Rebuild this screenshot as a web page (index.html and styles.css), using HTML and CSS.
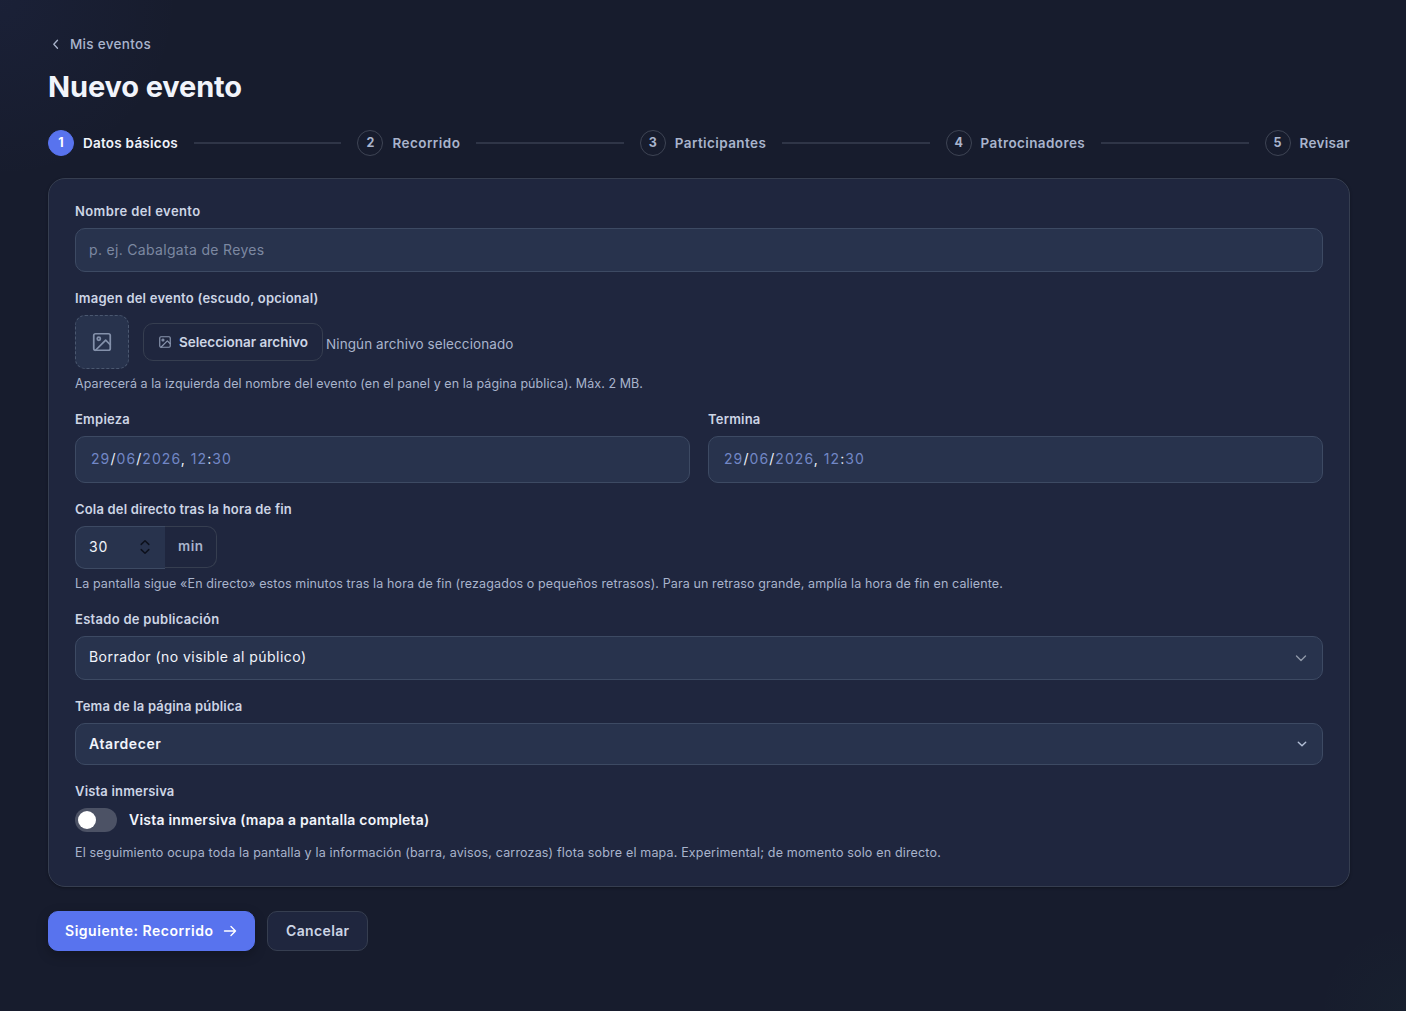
FILE: index.html
```html
<!DOCTYPE html>
<html lang="es">
<head>
<meta charset="utf-8">
<title>Nuevo evento</title>
<link rel="stylesheet" href="styles.css">
</head>
<body>
<main class="page">
  <a class="back"><svg class="back-icon" viewBox="0 0 14 14"><path d="M9.500 3.200 5.800 7.200l3.700 4"/></svg><span class="t-back">Mis eventos</span></a>
  <h1 class="title"><span class="t-title">Nuevo evento</span></h1>

  <ol class="steps">
    <li class="step step-active"><span class="step-num">1</span><span class="t-step1">Datos básicos</span></li>
    <li class="step-line"></li>
    <li class="step"><span class="step-num">2</span><span class="t-step2">Recorrido</span></li>
    <li class="step-line"></li>
    <li class="step"><span class="step-num">3</span><span class="t-step3">Participantes</span></li>
    <li class="step-line"></li>
    <li class="step"><span class="step-num">4</span><span class="t-step4">Patrocinadores</span></li>
    <li class="step-line"></li>
    <li class="step"><span class="step-num">5</span><span class="t-step5">Revisar</span></li>
  </ol>

  <section class="card">
    <div class="field">
      <div class="label"><span class="t-name">Nombre del evento</span></div>
      <div class="control control-name"><span class="t-placeholder">p. ej. Cabalgata de Reyes</span></div>
    </div>

    <div class="field">
      <div class="label"><span class="t-image">Imagen del evento (escudo, opcional)</span></div>
      <div class="upload">
        <div class="thumb"><svg class="thumb-icon" viewBox="0 0 24 24"><rect x="3" y="3" width="18" height="18" rx="2"/><circle cx="8.5" cy="8.5" r="1.7"/><path d="M21 15l-5-5L5 21"/></svg></div>
        <div class="file">
          <button class="file-button"><svg class="file-icon" viewBox="0 0 24 24"><rect x="3" y="3" width="18" height="18" rx="2"/><circle cx="8.5" cy="8.5" r="1.7"/><path d="M21 15l-5-5L5 21"/></svg><span class="t-select">Seleccionar archivo</span></button>
          <span class="file-status"><span class="t-nofile">Ningún archivo seleccionado</span></span>
        </div>
      </div>
      <div class="hint"><span class="t-hint1">Aparecerá a la izquierda del nombre del evento (en el panel y en la página pública). Máx. 2 MB.</span></div>
    </div>

    <div class="dates">
      <div class="field">
        <div class="label"><span class="t-start">Empieza</span></div>
        <div class="control control-date"><span class="date t-date"><b>29</b>/<b>06</b>/<b>2026</b>, <b>12</b>:<b>30</b></span></div>
      </div>
      <div class="field">
        <div class="label"><span class="t-end">Termina</span></div>
        <div class="control control-date"><span class="date t-date"><b>29</b>/<b>06</b>/<b>2026</b>, <b>12</b>:<b>30</b></span></div>
      </div>
    </div>

    <div class="field">
      <div class="label"><span class="t-tail">Cola del directo tras la hora de fin</span></div>
      <div class="minutes">
        <div class="control minutes-input"><span class="t-30">30</span><svg class="spinner" viewBox="0 0 10 16"><path d="M1.2 5.4 5 1.8l3.8 3.6M1.2 10.6 5 14.2l3.8-3.6"/></svg></div>
        <div class="minutes-unit"><span class="t-min">min</span></div>
      </div>
      <div class="hint"><span class="t-hint2">La pantalla sigue «En directo» estos minutos tras la hora de fin (rezagados o pequeños retrasos). Para un retraso grande, amplía la hora de fin en caliente.</span></div>
    </div>

    <div class="field">
      <div class="label"><span class="t-status">Estado de publicación</span></div>
      <div class="control control-status"><span class="t-draft">Borrador (no visible al público)</span><svg class="chevron" viewBox="0 0 16 16"><path d="m3.5 6 4.5 4.5L12.500 6"/></svg></div>
    </div>

    <div class="field">
      <div class="label"><span class="t-theme">Tema de la página pública</span></div>
      <div class="control control-theme"><span class="t-sunset">Atardecer</span><svg class="chevron chevron-small" viewBox="0 0 14 14"><path d="M3.300 5.200 7 8.800l3.700-3.600"/></svg></div>
    </div>

    <div class="field">
      <div class="label"><span class="t-immersive">Vista inmersiva</span></div>
      <div class="toggle-row"><span class="toggle"></span><span class="t-toggle">Vista inmersiva (mapa a pantalla completa)</span></div>
      <div class="hint hint-toggle"><span class="t-hint3">El seguimiento ocupa toda la pantalla y la información (barra, avisos, carrozas) flota sobre el mapa. Experimental; de momento solo en directo.</span></div>
    </div>
  </section>

  <div class="actions">
    <button class="button button-primary"><span class="t-next">Siguiente: Recorrido</span><svg class="arrow" viewBox="0 0 16 16"><path d="M2.500 8h11M9 3.500 13.500 8 9 12.500"/></svg></button>
    <button class="button"><span class="t-cancel">Cancelar</span></button>
  </div>
</main>
</body>
</html>
```
FILE: styles.css
```css
* { box-sizing: border-box; }

body {
  margin: 0;
  min-height: 1011px;
  background:
    radial-gradient(circle at 0 0, rgba(88, 115, 238, 0.05), transparent 180px),
    radial-gradient(circle at 100% 100%, rgba(60, 200, 120, 0.025), transparent 90px),
    #171c2d;
  color: #f1f4fb;
  font: 14px/20px Inter, "Liberation Sans", sans-serif;
}

svg {
  display: block;
  flex: none;
  fill: none;
  stroke: currentColor;
  stroke-linecap: round;
  stroke-linejoin: round;
}

span { white-space: nowrap; }

.page { padding: 34px 56px 60px 48px; }

.back {
  display: flex;
  align-items: center;
  gap: 8px;
  height: 20px;
  color: #a9b4cc;
  font-size: 13.500px;
  font-weight: 500;
}
.back-icon { width: 14px; height: 14px; stroke-width: 1.300; }

.title {
  margin: 13px 0 0;
  height: 40px;
  font-size: 29px;
  line-height: 40px;
  font-weight: 700;
}

.steps {
  display: flex;
  align-items: center;
  gap: 16px;
  margin: 23px 0 22px;
  padding: 0;
  list-style: none;
}
.step {
  display: flex;
  align-items: center;
  gap: 9px;
  color: #a9b4cc;
  font-size: 13.500px;
  font-weight: 600;
}
.step-active { color: #f1f4fb; }
.step-num {
  display: grid;
  place-items: center;
  width: 26px;
  height: 26px;
  border: 1px solid #3e4454;
  border-radius: 50%;
  font-size: 12.500px;
  font-weight: 700;
}
.step-active .step-num { border-color: #5873ee; background: #5873ee; color: #fff; }
.step-line { flex: 1; height: 2px; background: #2f3547; }

.card {
  display: flex;
  flex-direction: column;
  gap: 16px;
  height: 709px;
  padding: 22px 26px 0;
  border: 1px solid #363e50;
  border-radius: 17px;
  background: #1f263e;
  box-shadow: 0 1px 3px rgba(0, 0, 0, 0.3);
}

.label {
  height: 20px;
  margin-bottom: 7px;
  color: #cdd5e5;
  font-size: 13px;
  font-weight: 600;
}
.hint {
  height: 19px;
  margin-top: 5px;
  color: #a9b4cc;
  font-size: 12.500px;
  line-height: 19px;
}
.hint-toggle { margin-top: 11px; }

.control {
  display: flex;
  align-items: center;
  justify-content: space-between;
  padding: 0 13px;
  border: 1px solid #3d4a63;
  border-radius: 10px;
  background: #28334d;
}
.control-name { height: 44px; color: #7c88a1; }

.upload { display: flex; height: 54px; gap: 14px; }
.thumb {
  display: grid;
  place-items: center;
  width: 54px;
  height: 54px;
  border: 1px dashed #4b5870;
  border-radius: 10px;
  background: #28334d;
  color: #8491ab;
}
.thumb-icon { width: 22px; height: 22px; stroke-width: 1.900; }
.file { display: flex; gap: 3px; padding-top: 8px; }
.file-button {
  display: flex;
  align-items: center;
  gap: 7px;
  width: 180px;
  height: 38px;
  padding: 0 14px;
  border: 1px solid #363e50;
  border-radius: 10px;
  background: none;
  color: #cdd5e5;
  font: 600 13.500px/20px Inter, sans-serif;
}
.file-button span { padding-bottom: 1px; }
.file-icon { width: 14px; height: 14px; color: #8b97b0; stroke-width: 2; }
.file-status { padding-top: 11px; color: #a9b4cc; font-size: 13.500px; }

.dates { display: grid; grid-template-columns: 1fr 1fr; gap: 18px; }
.control-date { height: 47px; padding: 0 15px 2px; }
.date b { color: #7287c6; font-weight: 400; }

.minutes { display: flex; align-items: flex-start; height: 43px; }
.minutes-input {
  width: 90px;
  height: 43px;
  padding-bottom: 1px;
  border-right: 0;
  border-radius: 10px 0 0 10px;
}
.spinner { width: 10px; height: 16px; margin-right: 2px; color: #0d111c; stroke-width: 1.500; }
.minutes-unit {
  display: flex;
  align-items: center;
  width: 52px;
  height: 42px;
  padding: 0 0 2px 13px;
  border: 1px solid #363e50;
  border-left: 0;
  border-radius: 0 10px 10px 0;
  color: #a9b4cc;
  font-size: 13.500px;
  font-weight: 600;
}

.control-status { height: 44px; }
.control-status span { padding-bottom: 2px; }
.control-theme { height: 42px; font-weight: 600; }
.chevron { width: 16px; height: 16px; color: #8f98a8; stroke-width: 1.400; }
.chevron-small { width: 14px; height: 14px; color: #b3bfd6; }

.toggle-row { display: flex; align-items: center; gap: 12px; height: 24px; font-weight: 600; }
.toggle {
  display: flex;
  align-items: center;
  width: 42px;
  height: 24px;
  padding: 3px;
  border-radius: 12px;
  background: #4c5265;
}
.toggle::before {
  content: "";
  width: 18px;
  height: 18px;
  border-radius: 50%;
  background: #fff;
}

.actions { display: flex; gap: 12px; margin-top: 24px; }
.button {
  display: flex;
  align-items: center;
  height: 40px;
  width: 101px;
  padding: 0 18px;
  border: 1px solid #363e50;
  border-radius: 10px;
  background: #1f263e;
  color: #cdd5e5;
  font: 600 14px/20px Inter, sans-serif;
}
.button-primary {
  gap: 8px;
  width: 207px;
  padding: 0 16px;
  border-color: #5873ee;
  background: #5873ee;
  color: #fff;
  box-shadow: 0 4px 12px rgba(0, 0, 0, 0.25);
}
.arrow { width: 16px; height: 16px; stroke-width: 1.400; }

/* Tracking per text */
.t-back { letter-spacing: 0.298px; }
.t-title { letter-spacing: -0.125px; }
.t-step1 { letter-spacing: 0.236px; }
.t-step2 { letter-spacing: 0.458px; }
.t-step3 { letter-spacing: 0.404px; }
.t-step4 { letter-spacing: 0.4px; }
.t-step5 { letter-spacing: 0.306px; }
.t-name { letter-spacing: 0.395px; }
.t-placeholder { letter-spacing: 0.319px; }
.t-image { letter-spacing: 0.223px; }
.t-nofile { letter-spacing: 0.095px; }
.t-hint1 { letter-spacing: 0.07px; }
.t-start { letter-spacing: 0.232px; }
.t-end { letter-spacing: 0.203px; }
.t-date { letter-spacing: 1.075px; }
.t-tail { letter-spacing: 0.186px; }
.t-30 { letter-spacing: 0.758px; }
.t-min { letter-spacing: 0.5px; }
.t-hint2 { letter-spacing: 0.116px; }
.t-status { letter-spacing: 0.285px; }
.t-draft { letter-spacing: 0.456px; }
.t-theme { letter-spacing: 0.179px; }
.t-sunset { letter-spacing: 0.594px; }
.t-immersive { letter-spacing: 0.177px; }
.t-toggle { letter-spacing: 0.214px; }
.t-hint3 { letter-spacing: 0.17px; }
.t-next { letter-spacing: 0.529px; }
.t-cancel { letter-spacing: 0.359px; }
```
